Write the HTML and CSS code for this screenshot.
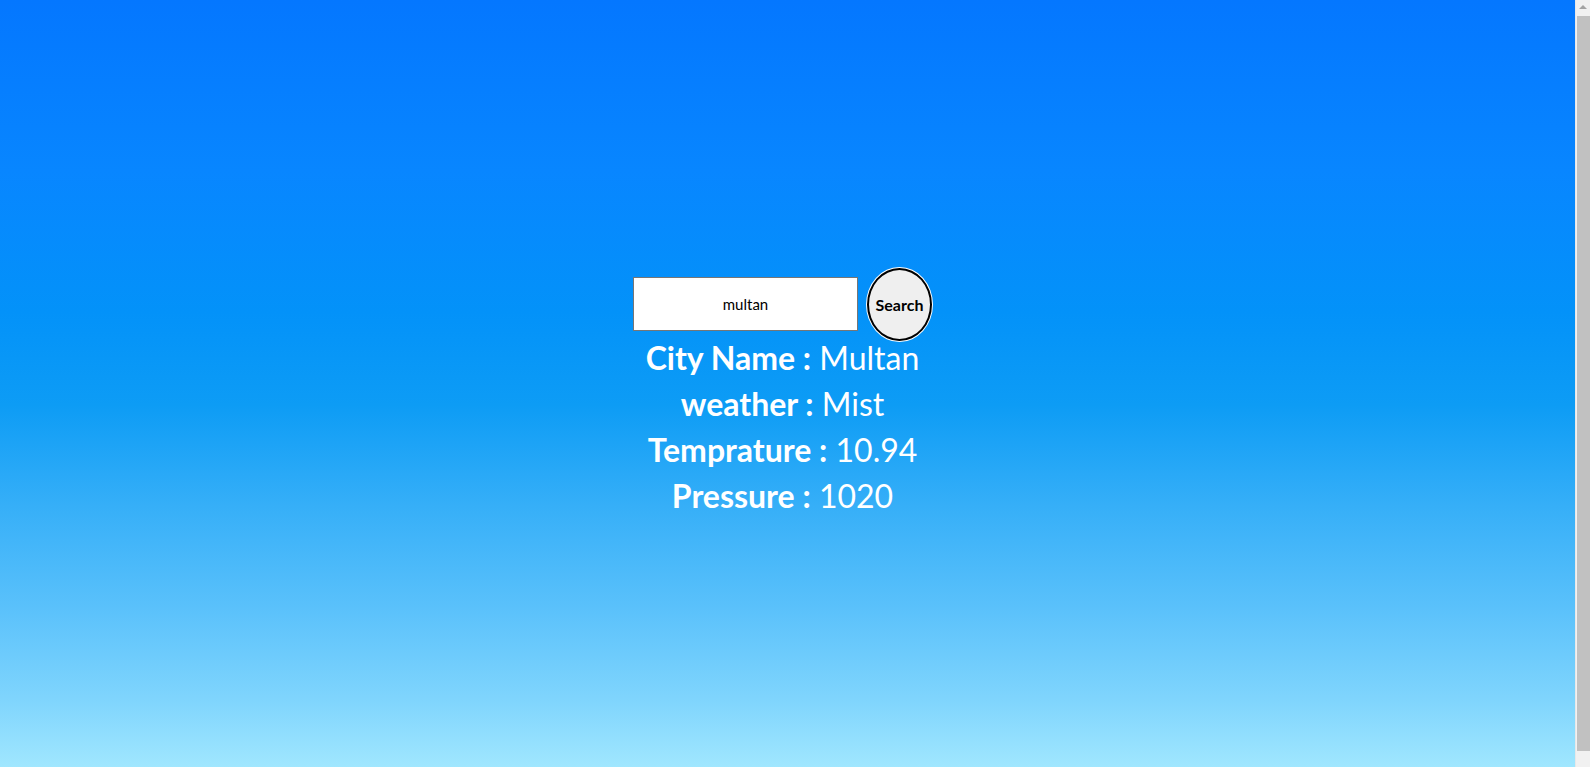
FILE: index.html
```html
<!DOCTYPE html>
<html lang="en">
<head>
<meta charset="utf-8">
<title>Weather</title>
<link rel="stylesheet" href="styles.css">
</head>
<body>
<main class="page">
  <div class="content">
    <form class="search-row">
      <input class="city-input" type="text" value="multan">
      <button class="search-btn" type="button">Search</button>
    </form>
    <div class="info">
      <p class="line"><b>City Name :</b> Multan</p>
      <p class="line"><b>weather :</b> Mist</p>
      <p class="line"><b>Temprature :</b> 10.94</p>
      <p class="line"><b>Pressure :</b> 1020</p>
    </div>
  </div>
</main>
<div class="scrollbar" aria-hidden="true">
  <div class="scroll-arrow"></div>
  <div class="scroll-thumb"></div>
</div>
</body>
</html>
```

FILE: styles.css
```css
html {
  background: linear-gradient(to bottom, #0477ff 0%, #0886ff 22%, #0392f9 40%, #0d9cf5 52%, #36aff8 65%, #5ac1fb 78%, #80d5fd 90%, #a6eaff 100%);
  min-height: 100%;
}
body {
  margin: 8px 23px 8px 8px;
  font-family: "Lato", "Open Sans", sans-serif;
}
.page {
  height: calc(100vh - 4px);
  display: flex;
  align-items: center;
  justify-content: center;
  padding-right: 10px;
  box-sizing: border-box;
}
.content {
  display: flex;
  flex-direction: column;
  align-items: center;
}
.search-row {
  display: flex;
  align-items: center;
  gap: 9px;
  margin: 0;
}
.city-input {
  width: 225px;
  height: 54px;
  box-sizing: border-box;
  border: 1px solid #767676;
  font-family: "Lato", sans-serif;
  font-size: 15px;
  text-align: center;
  color: #000;
  background: #fff;
  padding: 0;
}
.search-btn {
  width: 65px;
  height: 73px;
  border-radius: 50%;
  border: 2px solid #000;
  box-shadow: 0 0 0 1px #fff;
  background: #efefef;
  font-family: "Lato", sans-serif;
  font-weight: 700;
  font-size: 16px;
  color: #000;
  padding: 0;
}
.info {
  display: flex;
  flex-direction: column;
  align-items: center;
}
.line {
  margin: 0 0 13px;
  font-size: 32px;
  line-height: 33px;
  color: #fff;
  white-space: nowrap;
}
.line:last-child {
  margin-bottom: 0;
}
.line b {
  font-weight: 700;
}
.scrollbar {
  position: fixed;
  top: 0;
  right: 0;
  width: 15px;
  height: 100vh;
  background: #f1f1f1;
  border-left: 1px solid #e8e8e8;
  box-sizing: border-box;
  display: flex;
  flex-direction: column;
  align-items: center;
}
.scroll-arrow {
  margin-top: 5px;
  flex: none;
  width: 0;
  height: 0;
  border-left: 4px solid transparent;
  border-right: 4px solid transparent;
  border-bottom: 4px solid #a3a3a3;
}
.scroll-thumb {
  margin: 7px 0 0 2px;
  flex: none;
  width: 100%;
  height: 735px;
  background: #c1c1c1;
}
```
